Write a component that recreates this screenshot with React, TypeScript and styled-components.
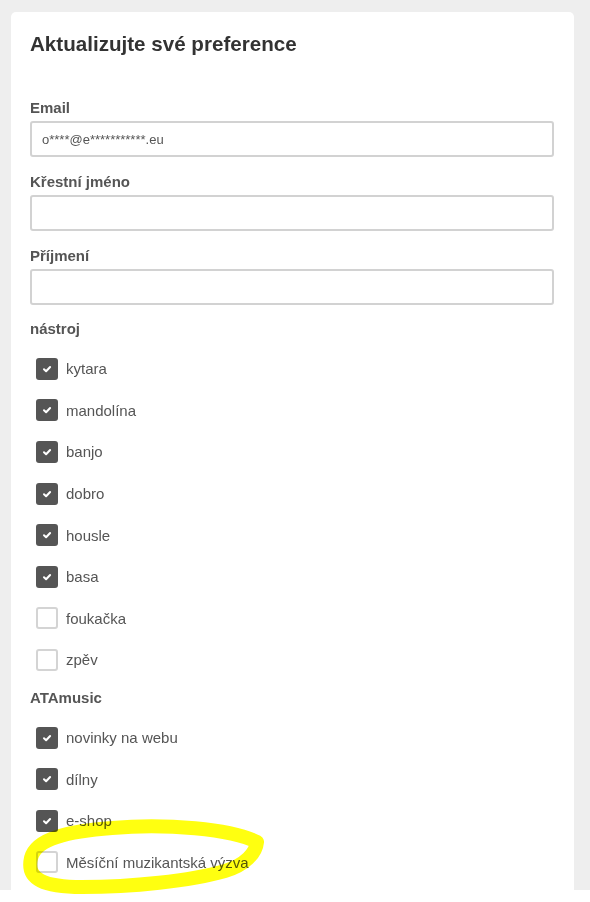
import React from 'react';
import styled, {createGlobalStyle} from 'styled-components';

const GlobalStyle = createGlobalStyle`
  html, body {
    margin: 0;
    padding: 0;
    background: #fff;
  }
  body {
    font-family: "Liberation Sans", Arial, sans-serif;
  }
`;

interface Option {
    label: string;
    checked: boolean;
}

const instruments: Option[] = [
    {label: 'kytara', checked: true},
    {label: 'mandolína', checked: true},
    {label: 'banjo', checked: true},
    {label: 'dobro', checked: true},
    {label: 'housle', checked: true},
    {label: 'basa', checked: true},
    {label: 'foukačka', checked: false},
    {label: 'zpěv', checked: false},
];

const ataMusic: Option[] = [
    {label: 'novinky na webu', checked: true},
    {label: 'dílny', checked: true},
    {label: 'e-shop', checked: true},
    {label: 'Měsíční muzikantská výzva', checked: false},
];

const Check = () => (
    <svg width="10" height="10" viewBox="0 0 10 10">
        <path d="M2 5.3 L4.1 7.3 L8.1 3" fill="none" stroke="#fff" strokeWidth="2" strokeLinecap="round" strokeLinejoin="round"/>
    </svg>
);

const CheckList: React.FC<{ items: Option[] }> = ({items}) => (
    <List>
        {items.map(item => (
            <CheckRow key={item.label}>
                <Box $checked={item.checked}>{item.checked && <Check/>}</Box>
                <CheckLabel>{item.label}</CheckLabel>
            </CheckRow>
        ))}
    </List>
);

const App: React.FC = () => {
    return (
        <>
            <GlobalStyle/>
            <Page>
                <Card>
                    <Title>Aktualizujte své preference</Title>
                    <FieldGroup>
                        <Label>Email</Label>
                        <Input type="text" defaultValue="o****@e***********.eu"/>
                    </FieldGroup>
                    <FieldGroup>
                        <Label>Křestní jméno</Label>
                        <Input type="text"/>
                    </FieldGroup>
                    <FieldGroup>
                        <Label>Příjmení</Label>
                        <Input type="text"/>
                    </FieldGroup>
                    <Section>
                        <SectionLabel>nástroj</SectionLabel>
                        <CheckList items={instruments}/>
                    </Section>
                    <Section $top={9}>
                        <SectionLabel>ATAmusic</SectionLabel>
                        <CheckList items={ataMusic}/>
                    </Section>
                </Card>
            </Page>
            <Highlight width="590" height="902" viewBox="0 0 590 902">
                <path
                    d="M257 842 C232 829, 165 823, 112 828 C70 831, 36 838, 31 858 C26 880, 45 887, 82 887 C132 887, 190 881, 225 871 C245 865, 256 853, 257 842"
                    fill="none"
                    stroke="#ffff10"
                    strokeWidth="14"
                    strokeLinecap="round"
                    strokeLinejoin="round"
                />
            </Highlight>
        </>
    );
};

export default App;

const Page = styled.div`
  background: #eeeeee;
  height: 890px;
  overflow: hidden;
  padding: 12px 16px 0 11px;
  box-sizing: border-box;
`;

const Card = styled.div`
  background: #fff;
  border-radius: 5px 5px 0 0;
  min-height: 100%;
  padding: 20px 20px 0 19px;
  box-sizing: border-box;
`;

const Title = styled.h1`
  margin: 0 0 43px;
  font-size: 20.6px;
  line-height: 24px;
  font-weight: 700;
  color: #333;
`;

const FieldGroup = styled.div`
  margin-bottom: 16px;
`;

const Label = styled.label`
  display: block;
  font-size: 15px;
  line-height: 18px;
  font-weight: 700;
  color: #555;
  margin-bottom: 4px;
`;

const Input = styled.input`
  display: block;
  width: 100%;
  height: 36px;
  box-sizing: border-box;
  border: 2px solid #d2d2d2;
  border-radius: 3px;
  padding: 0 10px;
  font-family: "Liberation Sans", Arial, sans-serif;
  font-size: 13px;
  color: #555;
  background: #fff;
  outline: none;
`;

const Section = styled.div<{ $top?: number }>`
  margin-top: ${p => (p.$top ?? 0) - 1}px;
`;

const SectionLabel = styled.div`
  font-size: 15px;
  line-height: 18px;
  font-weight: 700;
  color: #555;
  margin-bottom: 10px;
`;

const List = styled.div`
  display: flex;
  flex-direction: column;
  padding-left: 6px;
`;

const CheckRow = styled.label`
  display: flex;
  align-items: center;
  gap: 8px;
  height: 41.6px;
`;

const Box = styled.span<{ $checked: boolean }>`
  width: 22px;
  height: 22px;
  box-sizing: border-box;
  border-radius: 3px;
  display: flex;
  align-items: center;
  justify-content: center;
  background: ${p => (p.$checked ? '#555' : '#fff')};
  border: ${p => (p.$checked ? 'none' : '2px solid #d4d4d4')};
  flex-shrink: 0;
`;

const CheckLabel = styled.span`
  font-size: 15px;
  color: #555;
`;

const Highlight = styled.svg`
  position: absolute;
  top: 0;
  left: 0;
  pointer-events: none;
  mix-blend-mode: multiply;
`;
